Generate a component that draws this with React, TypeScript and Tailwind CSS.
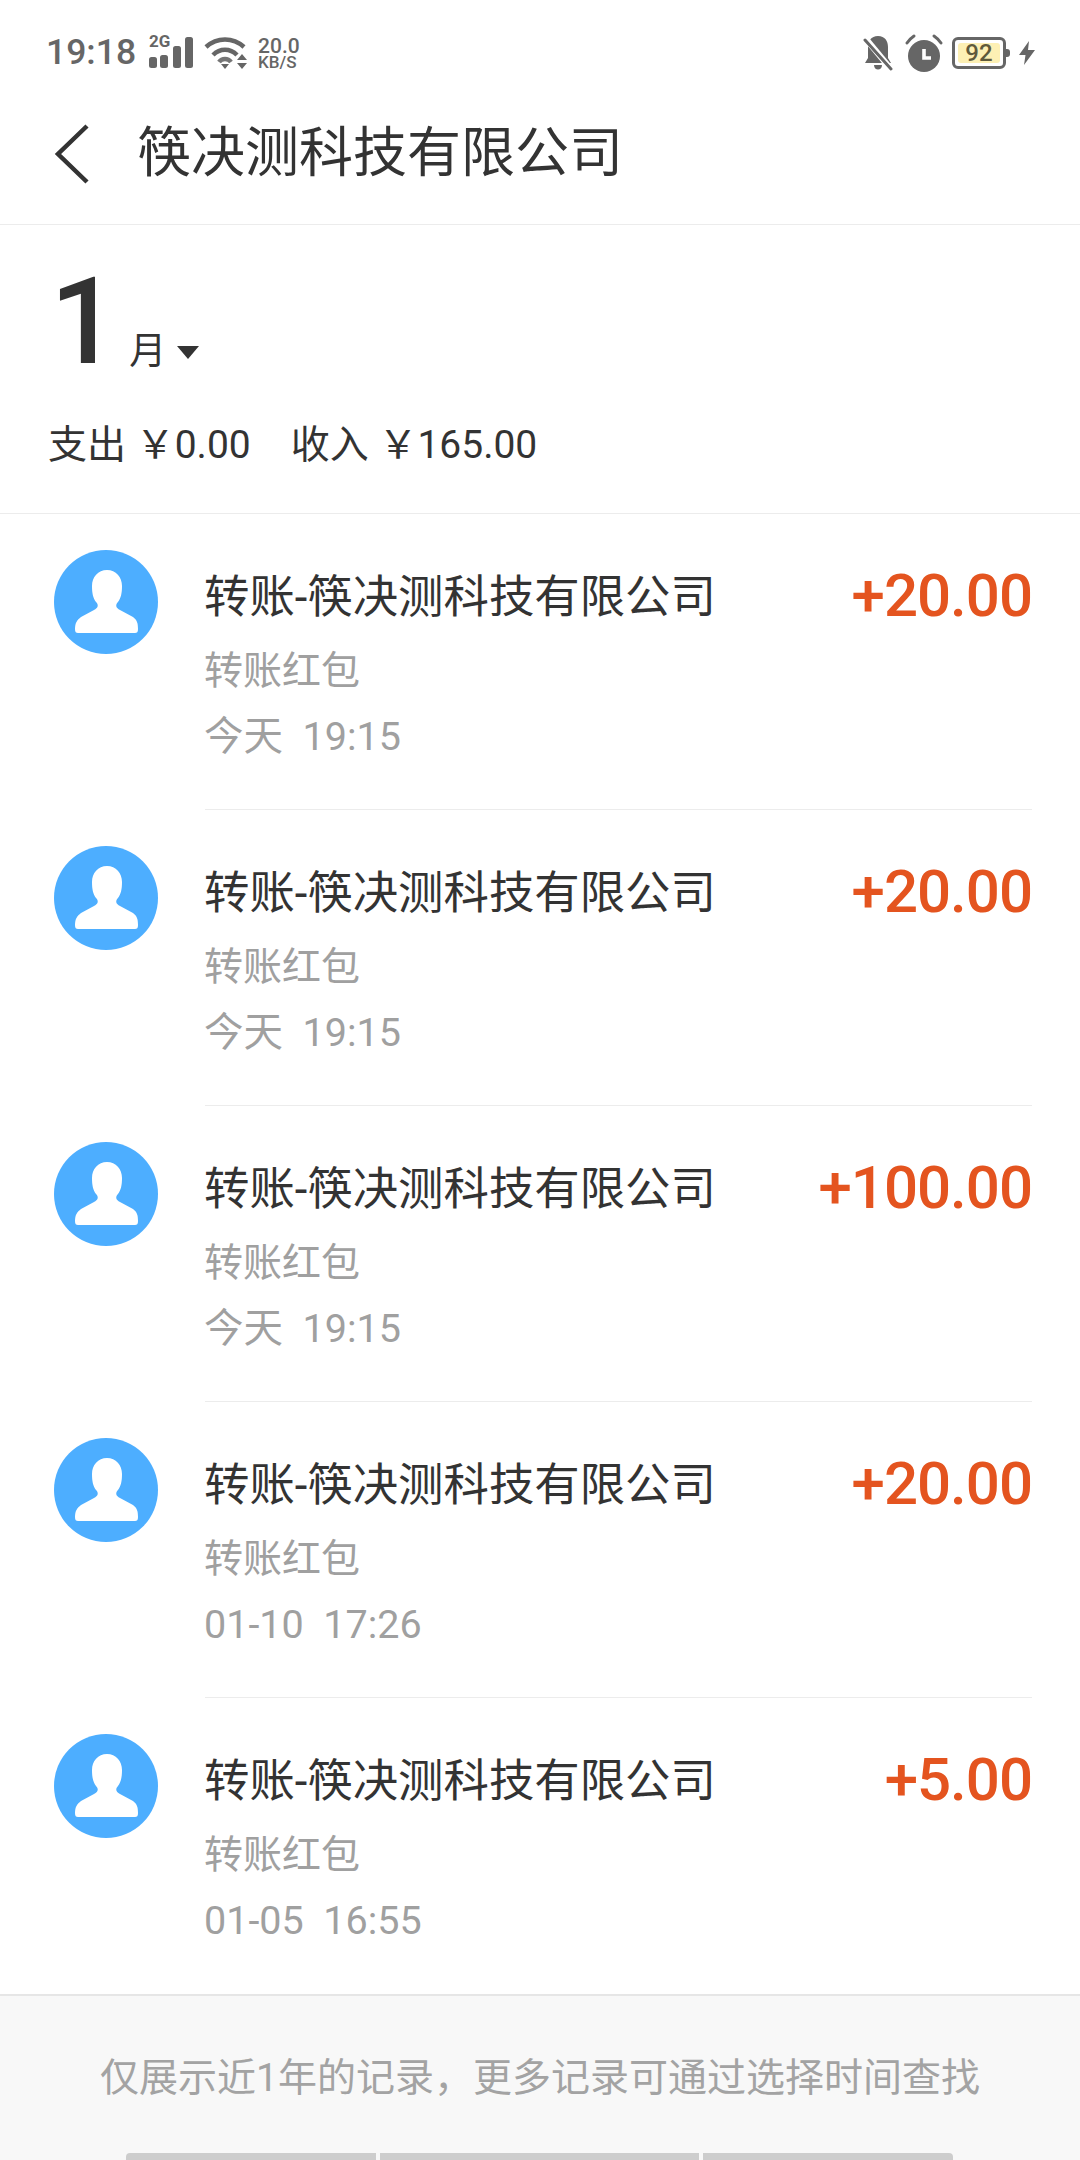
interface Txn { amount: string; time: string }

const txns: Txn[] = [
  { amount: "+20.00", time: "今天  19:15" },
  { amount: "+20.00", time: "今天  19:15" },
  { amount: "+100.00", time: "今天  19:15" },
  { amount: "+20.00", time: "01-10  17:26" },
  { amount: "+5.00", time: "01-05  16:55" },
];

function Avatar() {
  return (
    <div className="w-[104px] h-[104px] rounded-full bg-[#4daeff] shrink-0">
      <svg viewBox="0 0 104 104" className="w-full h-full">
        <path
          fill="#fff"
          d="M21 79 C21 73 23 70 27 67 L40 60 C44 58 45 55 42 52 C39 48 38 43 38 36 C38 27 44 20 53 20 C62 20 68 27 68 36 C68 43 67 48 64 52 C61 55 62 58 66 60 L79 67 C83 70 84 73 84 79 C84 82 83 83 81 83 L24 83 C22 83 21 82 21 79 Z"
        />
      </svg>
    </div>
  );
}

function Row({ txn, last }: { txn: Txn; last: boolean }) {
  return (
    <div className="h-[296px] flex pl-[54px] pr-[48px]">
      <div className="pt-[36px] w-[151px] shrink-0">
        <Avatar />
      </div>
      <div className={`flex-1 pt-[51px] ${last ? "" : "border-b border-[#ececec]"}`}>
        <div className="flex items-center justify-between h-[66px]">
          <span className="text-[45.4px] leading-[66px] text-[#333333] -ml-px">转账-筷决测科技有限公司</span>
          <span className="text-[60px] leading-[66px] font-medium tracking-[-1px] text-[#e4541f] -mt-[4px]">{txn.amount}</span>
        </div>
        <div className="h-[80px] text-[39px] leading-[80px] text-[#a0a0a0] -ml-px">转账红包</div>
        <div className="h-[52px] text-[39.5px] leading-[52px] text-[#a0a0a0] whitespace-pre -ml-px">{txn.time}</div>
      </div>
    </div>
  );
}

function StatusBar() {
  return (
    <div className="h-[96px] flex items-center justify-between pt-[10px] pl-[46px] pr-[44px] text-[#666666]">
      <div className="flex items-center">
        <span className="text-[35.5px] font-medium leading-none">19:18</span>
        <div className="relative w-[44px] h-[32px] ml-[13px]">
          <span className="absolute left-0 top-[-5px] text-[17px] font-bold leading-[18px]">2G</span>
          <svg viewBox="0 0 44 32" className="w-full h-full">
            <rect x="0" y="20" width="8" height="11" rx="2.5" fill="#666" />
            <rect x="11" y="18" width="8" height="13" rx="2.5" fill="#666" />
            <rect x="24" y="9" width="8" height="22" rx="2.5" fill="#666" />
            <rect x="36" y="0" width="8" height="31" rx="2.5" fill="#666" />
          </svg>
        </div>
        <svg viewBox="0 0 44 34" className="w-[44px] h-[34px] ml-[11px]">
          <path d="M2 11 C13 1 29 1 40 11" fill="none" stroke="#666" strokeWidth="4.5" />
          <path d="M9 19 C16 12 26 12 33 19" fill="none" stroke="#666" strokeWidth="4.5" />
          <path d="M15 26 C18 22 24 22 27 26" fill="none" stroke="#666" strokeWidth="4.5" opacity="0.9" />
          <path d="M17 28 H25 L21 33 Z" fill="#666" />
          <path d="M33 24 L38 18 L43 24 Z M33 27 H43 L38 33 Z" fill="#666" />
        </svg>
        <div className="ml-[10px] flex flex-col font-medium">
          <span className="text-[21px] leading-[18px]">20.0</span>
          <span className="text-[17px] leading-[15px]">KB/S</span>
        </div>
      </div>
      <div className="flex items-center">
        <svg viewBox="0 0 30 36" className="w-[30px] h-[36px]">
          <path d="M15 1 C8 1 5 6 5 12 V23 L2 28 H28 L25 23 V12 C25 6 22 1 15 1 Z" fill="#666" />
          <path d="M11 30 H19 C19 36 11 36 11 30 Z" fill="#666" />
          <path d="M3 4 L27 33" stroke="#fff" strokeWidth="6" />
          <path d="M2 5 L28 34" stroke="#666" strokeWidth="3" strokeLinecap="round" />
        </svg>
        <svg viewBox="0 0 38 38" className="w-[38px] h-[38px] ml-[12px]">
          <circle cx="19" cy="22" r="16" fill="#666" />
          <path d="M19 15 V24 H26" fill="none" stroke="#fff" strokeWidth="3.6" />
          <path d="M2 9 C4 6 6 4 9 2" fill="none" stroke="#666" strokeWidth="3" strokeLinecap="round" />
          <path d="M36 9 C34 6 32 4 29 2" fill="none" stroke="#666" strokeWidth="3" strokeLinecap="round" />
        </svg>
        <div className="relative ml-[9px] w-[54px] h-[32px] rounded-[6px] border-[3px] border-[#666666] p-[3px] flex">
          <div className="flex-1 rounded-[3px] bg-[#fdf0b4] flex items-center justify-center text-[24px] leading-none font-medium text-[#5f5a3c]">
            92
          </div>
          <span className="absolute right-[-7px] top-[9px] w-[4px] h-[8px] rounded-r-[3px] bg-[#666666]" />
        </div>
        <svg viewBox="0 0 18 24" className="w-[18px] h-[24px] ml-[12px]">
          <path d="M11 0 L1 14 H7.5 L6 24 L17 9 H10 Z" fill="#666" />
        </svg>
      </div>
    </div>
  );
}

export default function App() {
  return (
    <div className="w-[1080px] h-[2160px] bg-white overflow-hidden flex flex-col font-['Roboto','Noto_Sans_CJK_SC',sans-serif]">
      <StatusBar />
      <div className="h-[129px] flex items-center pb-[12px] border-b border-[#ececec]">
        <svg viewBox="0 0 36 60" className="w-[36px] h-[60px] ml-[54px]">
          <path d="M33 2 L4 30 L33 58" fill="none" stroke="#333" strokeWidth="4.5" />
        </svg>
        <span className="ml-[47px] text-[54px] text-[#333333] leading-none">筷决测科技有限公司</span>
      </div>
      <div className="h-[289px] border-b border-[#ececec] pl-[50px]">
        <div className="flex items-end h-[158px]">
          <span className="text-[120px] leading-[122px] text-[#333333] font-medium">1</span>
          <span className="ml-[11px] mb-[6px] text-[37px] leading-[50px] text-[#333333]">月</span>
          <span className="ml-[11px] mb-[24px] w-0 h-0 border-x-[11px] border-x-transparent border-t-[13px] border-t-[#333333]" />
        </div>
        <div className="mt-[37px] -ml-[2px] flex text-[39px] leading-[50px] text-[#333333]">
          <span className="whitespace-pre">支出 ￥0.00</span>
          <span className="whitespace-pre ml-[40px]">收入 ￥165.00</span>
        </div>
      </div>
      {txns.map((t, i) => (
        <Row key={i} txn={t} last={i === txns.length - 1} />
      ))}
      <div className="flex-1 bg-[#f8f8f8] border-t-2 border-[#e6e6e6] relative flex justify-center pt-[59px]">
        <span className="text-[39px] leading-[46px] text-[#a3a3a3]">仅展示近1年的记录，更多记录可通过选择时间查找</span>
        <div className="absolute bottom-0 left-[126px] flex gap-[4px] h-[7px]">
          <div className="w-[250px] bg-[#cdcdcd] rounded-tl-[4px]" />
          <div className="w-[319px] bg-[#cdcdcd]" />
          <div className="w-[250px] bg-[#cdcdcd] rounded-tr-[4px]" />
        </div>
      </div>
    </div>
  );
}
